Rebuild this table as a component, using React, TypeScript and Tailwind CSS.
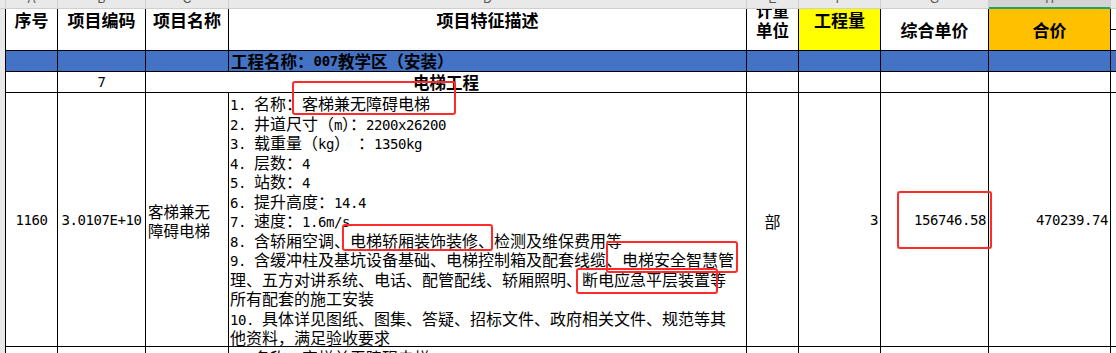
import React from "react";

const ASCII = /^[\x20-\x7e]+$/;

function T({ s, bold }: { s: string; bold?: boolean }) {
  const parts = s.split(/([\x20-\x7e]+)/).filter((p) => p.length > 0);
  return (
    <>
      {parts.map((p, i) =>
        ASCII.test(p) ? (
          <span
            key={i}
            className={
              bold
                ? "font-['DejaVu_Sans_Mono',monospace] text-[14px] tracking-[-0.3px] font-bold"
                : "font-['DejaVu_Sans_Mono',monospace] text-[14px] tracking-[-0.43px]"
            }
          >
            {p}
          </span>
        ) : (
          <span key={i}>{p}</span>
        )
      )}
    </>
  );
}

const descLines = [
  "1. 名称：客梯兼无障碍电梯",
  "2. 井道尺寸（m）：2200x26200",
  "3. 载重量（kg） ：1350kg",
  "4. 层数：4",
  "5. 站数：4",
  "6. 提升高度：14.4",
  "7. 速度：1.6m/s",
  "8. 含轿厢空调、电梯轿厢装饰装修、检测及维保费用等",
  "9. 含缓冲柱及基坑设备基础、电梯控制箱及配套线缆、电梯安全智慧管",
  "理、五方对讲系统、电话、配管配线、轿厢照明、断电应急平层装置等",
  "所有配套的施工安装",
  "10. 具体详见图纸、图集、答疑、招标文件、政府相关文件、规范等其",
  "他资料，满足验收要求",
];

const strip = [
  { c: "w-[53px] border-l border-r border-b border-[#cfcfcf] bg-[#e9e9e9]", l: "A" },
  { c: "w-[88px] border-r border-b border-[#cfcfcf] bg-[#e9e9e9]", l: "B" },
  { c: "w-[83px] border-r border-b border-[#cfcfcf] bg-[#e9e9e9]", l: "C" },
  { c: "w-[518px] border-r border-b border-[#cfcfcf] bg-[#e9e9e9]", l: "D" },
  { c: "w-[52px] border-r border-b border-[#cfcfcf] bg-[#e9e9e9]", l: "E" },
  { c: "w-[82px] border-r border-b border-[#cfcfcf] bg-[#e9e9e9]", l: "F" },
  { c: "w-[108px] border-r border-b border-[#cfcfcf] bg-[#e9e9e9]", l: "G" },
  { c: "w-[122px] border-r border-[#cfcfcf] border-b-2 border-b-[#21a366] bg-[#d4d4d4]", l: "H" },
  { c: "w-[5px] border-b border-[#cfcfcf] bg-[#e9e9e9]", l: "" },
];

const box = "absolute border-2 border-[#ff2b2b] rounded-[3px]";

export default function App() {
  return (
    <div className="relative w-[1116px] h-[353px] overflow-hidden bg-white text-black flex flex-col font-['Noto_Sans_CJK_SC','Noto_Sans',sans-serif]">
      {/* column letter strip */}
      <div className="flex h-[9px] shrink-0">
        <div className="w-[5px] shrink-0 bg-[#e9e9e9] border-b border-[#cfcfcf]" />
        {strip.map((s, i) => (
          <div key={i} className={`${s.c} shrink-0 overflow-hidden flex justify-center`}>
            <span className="text-[12px] leading-[12px] text-[#555] -translate-y-[7px] font-['Liberation_Sans',sans-serif]">
              {s.l}
            </span>
          </div>
        ))}
      </div>

      {/* header row */}
      <div className="flex h-[42px] shrink-0 text-[17px] font-bold leading-[20px]">
        <div className="w-[5px] shrink-0 bg-[#e9e9e9]" />
        <div className="w-[53px] shrink-0 border-l border-r border-b border-black flex justify-center pt-[1px]">序号</div>
        <div className="w-[88px] shrink-0 border-r border-b border-black flex justify-center pt-[1px]">项目编码</div>
        <div className="w-[83px] shrink-0 border-r border-b border-black flex justify-center pt-[1px]">项目名称</div>
        <div className="w-[518px] shrink-0 border-r border-b border-black flex justify-center pt-[1px]">项目特征描述</div>
        <div className="w-[52px] shrink-0 border-r border-b border-black flex flex-col items-center justify-end pb-[10px] overflow-hidden text-[16.5px]">
          <div className="whitespace-nowrap">计量</div>
          <div className="whitespace-nowrap">单位</div>
        </div>
        <div className="w-[82px] shrink-0 border-r border-b border-black bg-[#ffff00] flex justify-center pt-[1px]">工程量</div>
        <div className="w-[108px] shrink-0 border-r border-b border-black flex items-center justify-center">综合单价</div>
        <div className="w-[122px] shrink-0 border-r border-b border-black bg-[#ffc000] flex items-center justify-center">合价</div>
        <div className="w-[5px] shrink-0 flex flex-col">
          <div className="h-[21px] border-b border-black" />
          <div className="flex-1 border-b border-black" />
        </div>
      </div>

      {/* blue project row */}
      <div className="flex h-[21px] shrink-0">
        <div className="w-[5px] shrink-0 bg-[#e9e9e9]" />
        <div className="w-[53px] shrink-0 border-l border-r border-b border-black bg-[#4472c4]" />
        <div className="w-[88px] shrink-0 border-r border-b border-black bg-[#4472c4]" />
        <div className="w-[83px] shrink-0 border-r border-b border-black bg-[#4472c4]" />
        <div className="w-[518px] shrink-0 border-r border-b border-black bg-[#4472c4] flex items-center pl-[2px] text-[16.5px] font-bold leading-[20px] whitespace-pre">
          <T s="工程名称：007教学区（安装）" bold />
        </div>
        <div className="w-[52px] shrink-0 border-r border-b border-black bg-[#4472c4]" />
        <div className="w-[82px] shrink-0 border-r border-b border-black bg-[#4472c4]" />
        <div className="w-[108px] shrink-0 border-r border-b border-black bg-[#4472c4]" />
        <div className="w-[122px] shrink-0 border-r border-b border-black bg-[#4472c4]" />
        <div className="w-[5px] shrink-0 border-b border-black bg-[#4472c4]" />
      </div>

      {/* section row */}
      <div className="flex h-[21px] shrink-0">
        <div className="w-[5px] shrink-0 bg-[#e9e9e9]" />
        <div className="w-[53px] shrink-0 border-l border-r border-b border-black" />
        <div className="w-[88px] shrink-0 border-r border-b border-black flex items-center justify-center">
          <T s="7" />
        </div>
        <div className="w-[601px] shrink-0 border-r border-b border-black flex items-center justify-center text-[16.5px] font-bold leading-[20px]">
          电梯工程
        </div>
        <div className="w-[52px] shrink-0 border-r border-b border-black" />
        <div className="w-[82px] shrink-0 border-r border-b border-black" />
        <div className="w-[108px] shrink-0 border-r border-b border-black" />
        <div className="w-[122px] shrink-0 border-r border-b border-black" />
        <div className="w-[5px] shrink-0 border-b border-black" />
      </div>

      {/* main item row */}
      <div className="flex h-[254px] shrink-0 text-[16px]">
        <div className="w-[5px] shrink-0 bg-[#e9e9e9]" />
        <div className="w-[53px] shrink-0 border-l border-r border-b border-black flex items-center justify-center pt-[2px]">
          <T s="1160" />
        </div>
        <div className="w-[88px] shrink-0 border-r border-b border-black flex items-center justify-center pt-[2px]">
          <T s="3.0107E+10" />
        </div>
        <div className="w-[83px] shrink-0 border-r border-b border-black flex flex-col justify-center pl-[2px] pt-[2px] text-[15.5px] leading-[18.5px]">
          <div className="h-[18.5px] whitespace-nowrap">客梯兼无</div>
          <div className="h-[18.5px] whitespace-nowrap">障碍电梯</div>
        </div>
        <div className="w-[518px] shrink-0 border-r border-b border-black pl-[1px] pt-[1px] leading-[19.5px] overflow-hidden">
          {descLines.map((l, i) => (
            <div key={i} className="h-[19.5px] whitespace-pre">
              <T s={l} />
            </div>
          ))}
        </div>
        <div className="w-[52px] shrink-0 border-r border-b border-black flex items-center justify-center pt-[2px]">部</div>
        <div className="w-[82px] shrink-0 border-r border-b border-black flex items-center justify-end pr-[2px] pt-[2px]">
          <T s="3" />
        </div>
        <div className="w-[108px] shrink-0 border-r border-b border-black flex items-center justify-end pr-[2px] pt-[2px]">
          <T s="156746.58" />
        </div>
        <div className="w-[122px] shrink-0 border-r border-b border-black flex items-center justify-end pr-[2px] pt-[2px]">
          <T s="470239.74" />
        </div>
        <div className="w-[5px] shrink-0 border-b border-black" />
      </div>

      {/* next row (partially visible) */}
      <div className="flex flex-1 text-[16px]">
        <div className="w-[5px] shrink-0 bg-[#e9e9e9]" />
        <div className="w-[53px] shrink-0 border-l border-r border-black" />
        <div className="w-[88px] shrink-0 border-r border-black" />
        <div className="w-[83px] shrink-0 border-r border-black" />
        <div className="w-[518px] shrink-0 border-r border-black pl-[1px] pt-[1px] leading-[19.5px]">
          <div className="h-[19.5px] whitespace-pre">
            <T s="1. 名称：客梯兼无障碍电梯" />
          </div>
        </div>
        <div className="w-[52px] shrink-0 border-r border-black" />
        <div className="w-[82px] shrink-0 border-r border-black" />
        <div className="w-[108px] shrink-0 border-r border-black" />
        <div className="w-[122px] shrink-0 border-r border-black" />
        <div className="w-[5px] shrink-0" />
      </div>

      {/* red annotation boxes */}
      <div className={`${box} left-[292px] top-[81px] w-[164px] h-[34px]`} />
      <div className={`${box} left-[342px] top-[224px] w-[151px] h-[27px]`} />
      <div className={`${box} left-[606px] top-[241px] w-[132px] h-[32px]`} />
      <div className={`${box} left-[576px] top-[268px] w-[142px] h-[26px]`} />
      <div className={`${box} left-[897px] top-[191px] w-[95px] h-[58px]`} />
    </div>
  );
}
